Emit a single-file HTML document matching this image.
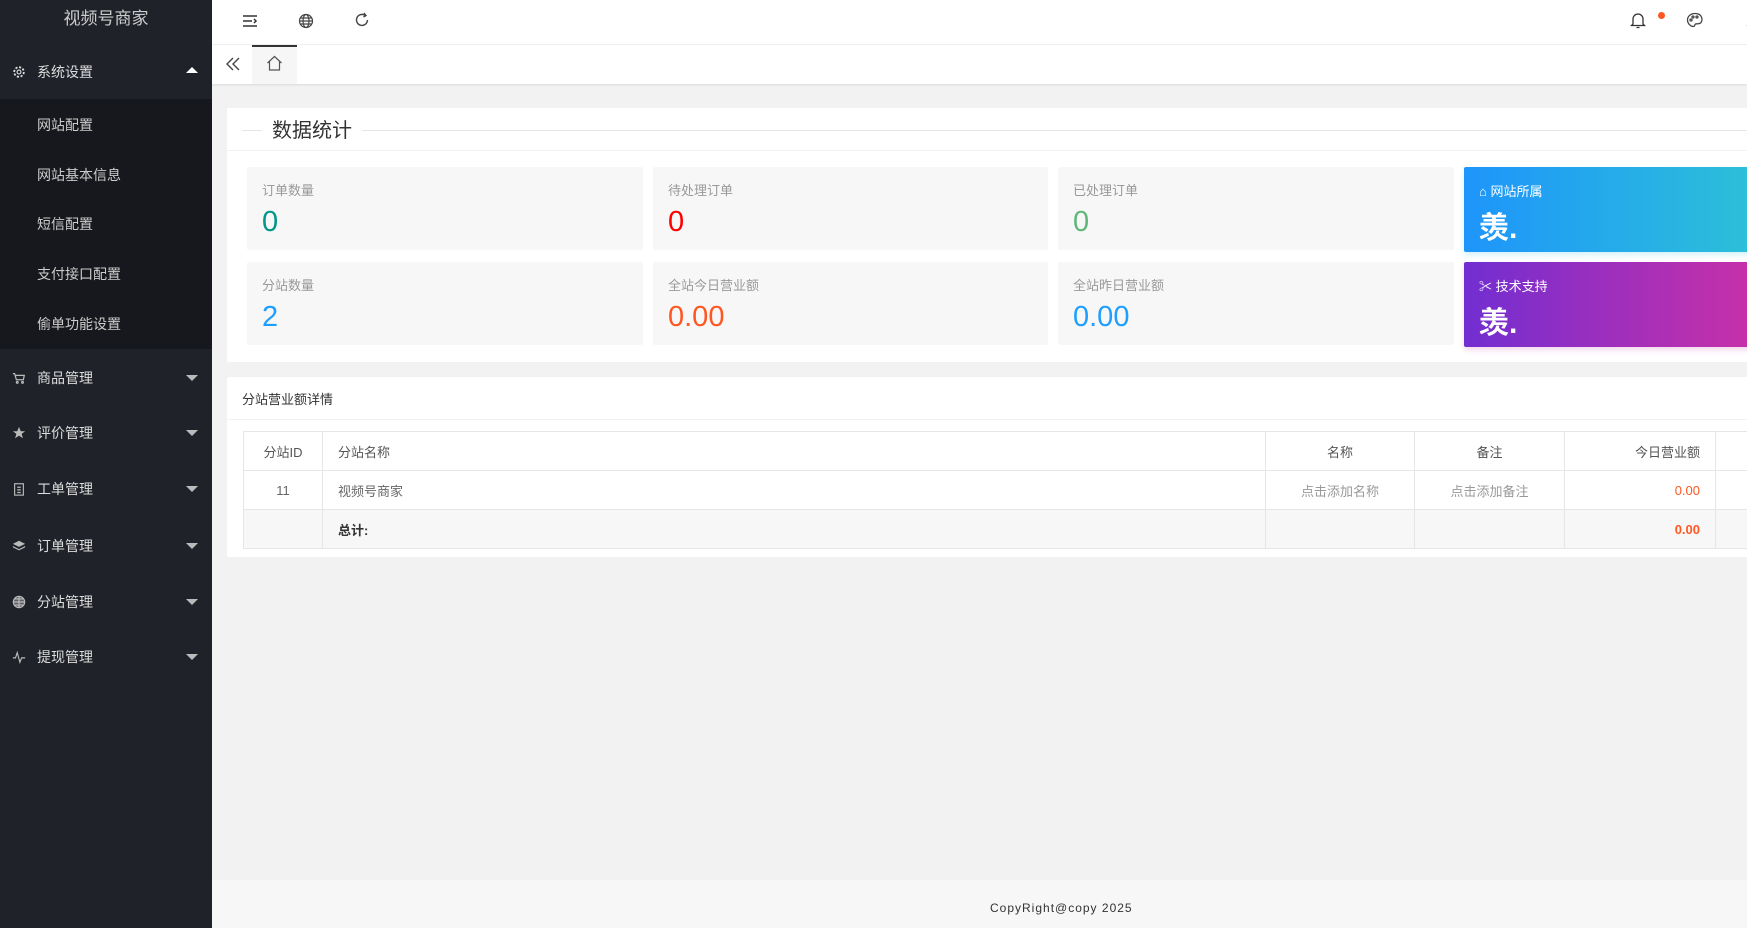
<!DOCTYPE html>
<html><head><meta charset="utf-8"><style>
*{margin:0;padding:0;box-sizing:border-box}
body{width:1747px;height:928px;overflow:hidden;background:#f2f2f2;font-family:"Liberation Sans","Noto Sans CJK SC",sans-serif;position:relative;font-size:14px}
.abs{position:absolute}
#side{left:0;top:0;width:212px;height:928px;background:#20222a}
.logo{top:0;left:0;width:212px;height:45px;text-align:center;line-height:38px;color:#ccc;font-size:17px}
.m{left:0;width:212px;height:50px;color:#ddd;font-size:14px;line-height:50px}
.m .t{position:absolute;left:37px}
.m .ic{position:absolute;left:12px;top:18px;width:14px;height:14px}
.m .ar{position:absolute;left:186px;top:22px;width:0;height:0;border-left:6px solid transparent;border-right:6px solid transparent;border-top:6px solid #bbb}
.m .up{border-top:none;border-bottom:6px solid #fff;top:20px}
.sub{left:0;top:99px;width:212px;height:250px;background:#17181d}
.s{left:37px;color:#ccc;font-size:14px;line-height:20px}
#hdr{left:212px;top:0;width:1535px;height:45px;background:#fff;border-bottom:1px solid #f0f0f0}
#tabs{left:212px;top:45px;width:1535px;height:39px;background:#fff;box-shadow:0 1px 2px rgba(0,0,0,.1)}
.card{background:#fff;border-radius:2px}
.st{background:#f7f7f7;border-radius:2px}
.st .l{position:absolute;left:15px;top:13px;font-size:13px;color:#999}
.st .n{position:absolute;left:15px;top:39px;font-size:29px}
.gb{border-radius:2px;color:#fff}
.gb .l{position:absolute;left:15px;top:14px;font-size:13px}
.gb .n{position:absolute;left:15px;top:36px;font-size:30px;font-weight:bold}
table{border-collapse:collapse;position:absolute;left:243px;top:431px;width:1520px;font-size:13px;color:#666}
td{border:1px solid #e6e6e6;height:39px;padding:0 15px}
</style></head><body>
<div id="side" class="abs">
<div class="logo abs">视频号商家</div>
<div class="m abs" style="top:47px;background:#20222a"><svg class="ic" viewBox="0 0 16 16"><circle cx="8" cy="8" r="5.5" fill="none" stroke="#ddd" stroke-width="2" stroke-dasharray="2.5 1.8"/><circle cx="8" cy="8" r="2.2" fill="none" stroke="#ddd" stroke-width="1.3"/></svg><span class="t">系统设置</span><span class="ar up"></span></div>
<div class="sub abs"></div>
<div class="s abs" style="top:115px">网站配置</div>
<div class="s abs" style="top:165px">网站基本信息</div>
<div class="s abs" style="top:214px">短信配置</div>
<div class="s abs" style="top:264px">支付接口配置</div>
<div class="s abs" style="top:314px">偷单功能设置</div>
<div class="m abs" style="top:353px"><svg class="ic" viewBox="0 0 16 16" fill="none" stroke="#bbb" stroke-width="1.4"><path d="M1 3h2l2 7h8l1-5H4"/><circle cx="6" cy="13" r="1"/><circle cx="12" cy="13" r="1"/></svg><span class="t">商品管理</span><span class="ar"></span></div>
<div class="m abs" style="top:408px"><svg class="ic" viewBox="0 0 16 16"><path d="M8 1l2 5h5l-4 3 1.5 5L8 11l-4.5 3L5 9 1 6h5z" fill="#bbb"/></svg><span class="t">评价管理</span><span class="ar"></span></div>
<div class="m abs" style="top:464px"><svg class="ic" viewBox="0 0 16 16" fill="none" stroke="#bbb" stroke-width="1.3"><rect x="3" y="2" width="10" height="13"/><path d="M6 6h4M6 9h4M6 12h4"/></svg><span class="t">工单管理</span><span class="ar"></span></div>
<div class="m abs" style="top:521px"><svg class="ic" viewBox="0 0 16 16" fill="#bbb"><path d="M8 2l7 3.5-7 3.5-7-3.5z"/><path d="M1 8l7 3.5 7-3.5v1.5L8 13 1 9.5z"/></svg><span class="t">订单管理</span><span class="ar"></span></div>
<div class="m abs" style="top:577px"><svg class="ic" viewBox="0 0 16 16" fill="none" stroke="#bbb" stroke-width="1.3"><circle cx="8" cy="8" r="6.5" fill="#bbb" fill-opacity=".4"/><path d="M1.5 8h13M8 1.5v13M3 4.5h10M3 11.5h10"/></svg><span class="t">分站管理</span><span class="ar"></span></div>
<div class="m abs" style="top:632px"><svg class="ic" viewBox="0 0 16 16" fill="none" stroke="#bbb" stroke-width="1.3"><path d="M1 9h3l2-6 3 11 2-5h4"/></svg><span class="t">提现管理</span><span class="ar"></span></div>
</div>
<div id="hdr" class="abs">
<svg class="abs" style="left:30px;top:13px" width="16" height="16" viewBox="0 0 16 16" stroke="#333" stroke-width="1.5" fill="none"><path d="M1 3h14M1 8h9M1 13h14M12 6l2 2-2 2"/></svg>
<svg class="abs" style="left:86px;top:13px" width="16" height="16" viewBox="0 0 16 16" stroke="#444" stroke-width="1.2" fill="none"><circle cx="8" cy="8" r="6.5"/><ellipse cx="8" cy="8" rx="3" ry="6.5"/><path d="M1.5 8h13M2.5 5h11M2.5 11h11"/></svg>
<svg class="abs" style="left:142px;top:12px" width="16" height="16" viewBox="0 0 16 16" stroke="#444" stroke-width="1.4" fill="none"><path d="M13.5 8A5.5 5.5 0 1 1 11 3.3"/><path d="M10 1l2 2.5-2.5 1.5"/></svg>
<svg class="abs" style="left:1418px;top:12px" width="16" height="17" viewBox="0 0 16 17" stroke="#333" stroke-width="1.3" fill="none"><path d="M3 12V7a5 5 0 0 1 10 0v5l1.5 1.5h-13zM6.5 15.5h3"/></svg>
<div class="abs" style="left:1446px;top:12px;width:7px;height:7px;border-radius:50%;background:#ff5722"></div>
<svg class="abs" style="left:1474px;top:12px" width="18" height="16" viewBox="0 0 18 16" stroke="#444" stroke-width="1.3" fill="none"><path d="M9 1.5C4.5 1.5 1.5 4.5 1.5 8s3 6.5 6 6.5c1.5 0 1-2 2-2.5s4 .5 5.5-1.5S17 1.5 9 1.5z"/><circle cx="5" cy="8" r="1"/><circle cx="7" cy="5" r="1"/><circle cx="11" cy="5" r="1"/></svg>
<svg class="abs" style="left:1530px;top:12px" width="10" height="16" viewBox="0 0 10 16" stroke="#444" stroke-width="1.3" fill="none"><path d="M5 1a4 4 0 0 1 4 4v5l-4 4"/></svg>
</div>
<div id="tabs" class="abs">
<svg class="abs" style="left:13px;top:12px" width="16" height="14" viewBox="0 0 16 14" stroke="#444" stroke-width="1.4" fill="none"><path d="M8 1L2 7l6 6M14 1L8 7l6 6"/></svg>
<div class="abs" style="left:40px;top:0;width:45px;height:39px;background:#f6f6f6;border-top:2px solid #333"></div>
<svg class="abs" style="left:54px;top:10px" width="17" height="17" viewBox="0 0 17 17" stroke="#555" stroke-width="1.2" fill="none"><path d="M1.5 8L8.5 1.5 15.5 8M3.5 6.5V15h10V6.5"/></svg>
</div>
<div class="card abs" style="left:227px;top:108px;width:1530px;height:254px">
<div class="abs" style="left:15px;top:22px;width:1530px;height:1px;background:#e6e6e6"></div>
<div class="abs" style="left:35px;top:9px;background:#fff;padding:0 10px;font-size:20px;color:#333;line-height:28px">数据统计</div>
<div class="abs" style="left:0;top:42px;width:1530px;height:1px;background:#f2f2f2"></div>
</div>
<div class="st abs" style="left:247px;top:167px;width:396px;height:83px"><span class="l">订单数量</span><span class="n" style="color:#009688">0</span></div>
<div class="st abs" style="left:653px;top:167px;width:395px;height:83px"><span class="l">待处理订单</span><span class="n" style="color:#ff0000">0</span></div>
<div class="st abs" style="left:1058px;top:167px;width:396px;height:83px"><span class="l">已处理订单</span><span class="n" style="color:#5fb878">0</span></div>
<div class="gb abs" style="left:1464px;top:167px;width:290px;height:85px;background:linear-gradient(90deg,#1e95fb,#2cc0d8);box-shadow:0 3px 6px rgba(40,190,220,.2)"><span class="l">⌂ 网站所属</span><span class="n">羡.</span></div>
<div class="st abs" style="left:247px;top:262px;width:396px;height:83px"><span class="l">分站数量</span><span class="n" style="color:#1e9fff">2</span></div>
<div class="st abs" style="left:653px;top:262px;width:395px;height:83px"><span class="l">全站今日营业额</span><span class="n" style="color:#ff5722">0.00</span></div>
<div class="st abs" style="left:1058px;top:262px;width:396px;height:83px"><span class="l">全站昨日营业额</span><span class="n" style="color:#1e9fff">0.00</span></div>
<div class="gb abs" style="left:1464px;top:262px;width:290px;height:85px;background:linear-gradient(90deg,#722ed1,#c830a8);box-shadow:0 3px 6px rgba(200,50,170,.2)"><span class="l">✂ 技术支持</span><span class="n">羡.</span></div>
<div class="card abs" style="left:227px;top:377px;width:1530px;height:180px">
<div class="abs" style="left:15px;top:12px;font-size:13px;color:#333">分站营业额详情</div>
<div class="abs" style="left:0;top:42px;width:1530px;height:1px;background:#f2f2f2"></div>
</div>
<table>
<tr style="color:#555"><td style="width:79px;text-align:center">分站ID</td><td style="width:943px">分站名称</td><td style="width:149px;text-align:center">名称</td><td style="width:150px;text-align:center">备注</td><td style="width:151px;text-align:right">今日营业额</td><td></td></tr>
<tr><td style="text-align:center">11</td><td>视频号商家</td><td style="text-align:center;color:#999">点击添加名称</td><td style="text-align:center;color:#999">点击添加备注</td><td style="text-align:right;color:#ff5722">0.00</td><td></td></tr>
<tr style="background:#f7f7f7"><td></td><td style="font-weight:bold;color:#333">总计:</td><td></td><td></td><td style="text-align:right;color:#ff5722;font-weight:bold">0.00</td><td></td></tr>
</table>
<div class="abs" style="left:212px;top:880px;width:1535px;height:48px;background:#f7f7f7"></div>
<div class="abs" style="left:990px;top:900px;font-size:12px;color:#333;letter-spacing:1px;line-height:16px">CopyRight@copy 2025</div>
</body></html>
